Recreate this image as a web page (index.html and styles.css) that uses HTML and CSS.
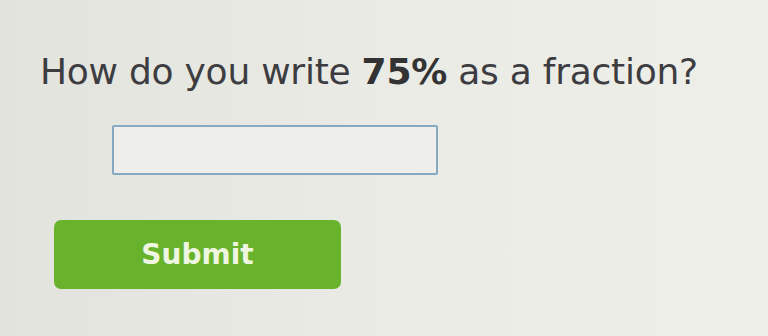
FILE: index.html
```html
<!DOCTYPE html>
<html lang="en">
<head>
    <meta charset="UTF-8">
    <title>Question</title>
    <link rel="stylesheet" href="styles.css">
</head>
<body>
    <div class="question">
        <p class="prompt">How do you write <b>75%</b> as a fraction?</p>

        <!-- Answer field -->
        <input type="text" class="answer" aria-label="Answer">

        <button class="submit">Submit</button>
    </div>
</body>
</html>
```

FILE: styles.css
```css
/* General Styling */
body {
    margin: 0;
    width: 768px;
    height: 336px;
    overflow: hidden;
    font-family: "DejaVu Sans", Verdana, sans-serif;
    background: linear-gradient(to right, #e3e3de, #ebebe6 50%, #efefea);
}

.question {
    display: flex;
    flex-direction: column;
    align-items: flex-start;
    padding: 51px 0 0 40px;
}

.prompt {
    margin: 0;
    font-size: 36px;
    line-height: 42px;
    color: #3d3d41;
    letter-spacing: -0.25px;
}

.prompt b {
    color: #333;
}

/* Answer field */
.answer {
    margin: 32px 0 0 72px;
    width: 326px;
    height: 50px;
    box-sizing: border-box;
    border: 2px solid #86a9c2;
    border-radius: 2px;
    background: #eeeeea;
    outline: none;
}

/* Submit button */
.submit {
    margin: 45px 0 0 14px;
    width: 287px;
    height: 69px;
    border: none;
    border-radius: 7px;
    background: #69b22c;
    color: #eef6e2;
    font-family: "DejaVu Sans", Verdana, sans-serif;
    font-size: 28px;
    font-weight: bold;
    cursor: pointer;
}
```
